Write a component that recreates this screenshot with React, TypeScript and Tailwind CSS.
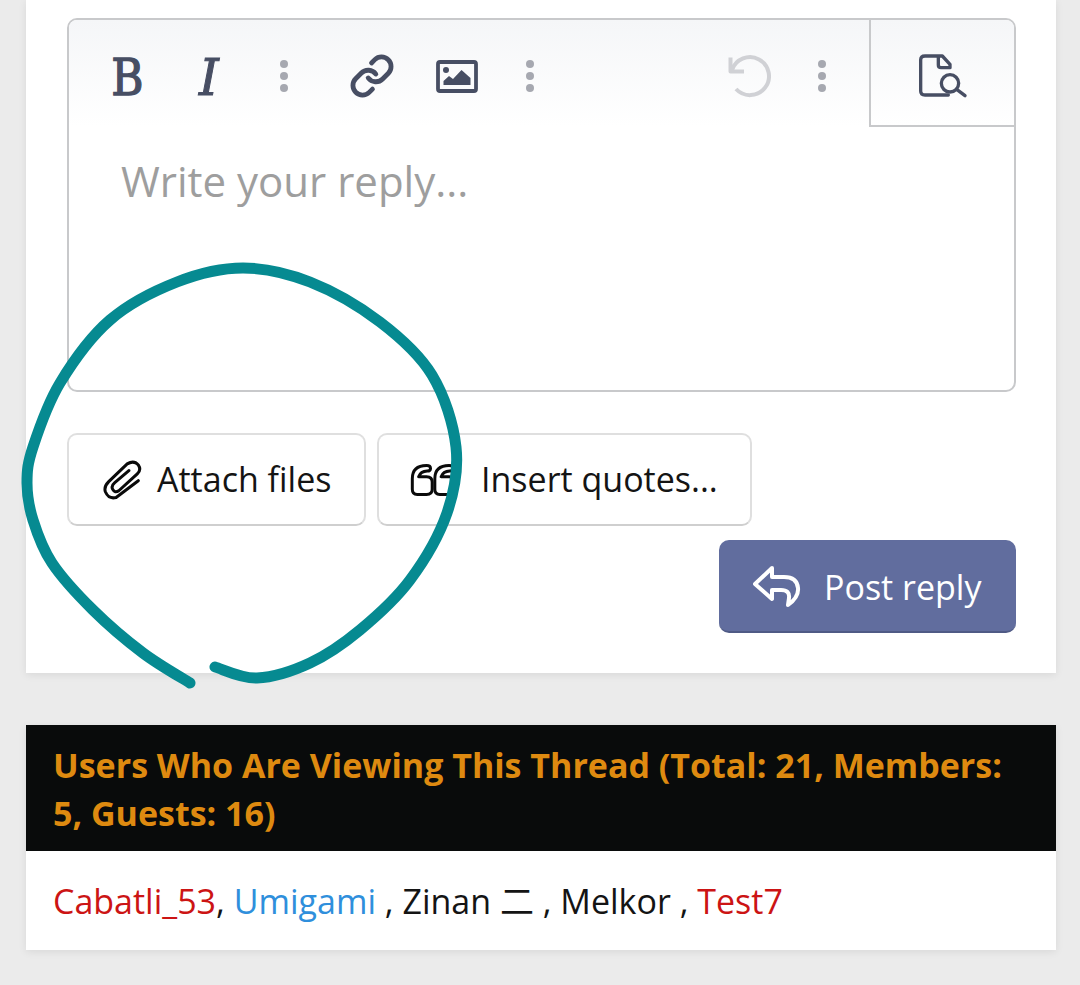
import { Link } from 'lucide-react';

const font = { fontFamily: '"Open Sans", "Noto Sans CJK SC", sans-serif' };

// --- Editor toolbar icons ---
const Dots = () => (
  <svg width="12" height="36" viewBox="0 0 12 36" className="fill-[#a6a8b0]">
    <circle cx="6" cy="6" r="4" />
    <circle cx="6" cy="18" r="4" />
    <circle cx="6" cy="30" r="4" />
  </svg>
);

const ImageIcon = () => (
  <svg width="42" height="33" viewBox="0 0 42 33">
    <rect x="2" y="2" width="38" height="29" rx="2" fill="none" stroke="#474e63" strokeWidth="3.8" />
    <circle cx="10" cy="10" r="3" fill="#474e63" />
    <path d="M7.500 25 V21 L13 16 L17 19 L25.500 10 L34.500 18 V25 Z" fill="#474e63" />
  </svg>
);

const UndoIcon = () => (
  <svg width="44" height="44" viewBox="0 0 44 44" fill="none" stroke="#d0d1d5" strokeWidth="4">
    <path d="M5 16 A19 19 0 1 1 9 35" />
    <path d="M3.500 3.500 V17.500 H17" strokeLinejoin="round" />
  </svg>
);

const PreviewIcon = () => (
  <svg width="75" height="60" viewBox="0 0 225 180" fill="none" stroke="#474e63" strokeWidth="10" strokeLinecap="round" strokeLinejoin="round">
    <path d="M130 150 H60 Q47 150 47 138 V45 Q47 33 60 33 H112 L135 58 V68 H108 Q100 68 100 60 V35" />
    <circle cx="135" cy="115" r="26" />
    <path d="M155 133 L180 152" />
  </svg>
);

const ClipIcon = () => (
  <svg width="42" height="44" viewBox="20 5 125 130" fill="none" stroke="#0a0a0a" strokeWidth="9" strokeLinecap="round" strokeLinejoin="round">
    <path d="M128 72 L62 122 Q40 128 30 105 Q25 90 40 75 L95 22 Q115 10 128 25 Q138 40 125 52 L70 102 Q58 110 52 98 Q46 88 58 78 L100 42" />
  </svg>
);

const QuoteIcon = () => (
  <svg width="48" height="34" viewBox="30 25 145 102" fill="none" stroke="#0a0a0a" strokeWidth="9" strokeLinejoin="round">
    <path d="M37 72 Q37 32 80 32 Q92 32 92 41 Q92 49 82 49 Q62 50 56 66 H80 Q97 66 97 82 V104 Q97 120 80 120 H52 Q37 120 37 104 Z" />
    <path d="M105 72 Q105 32 148 32 Q160 32 160 41 Q160 49 150 49 Q130 50 124 66 H148 Q165 66 165 82 V104 Q165 120 148 120 H120 Q105 120 105 104 Z" />
  </svg>
);

const ReplyIcon = () => (
  <svg width="48" height="42" viewBox="0 0 48 42" fill="none" stroke="white" strokeWidth="4" strokeLinejoin="round" strokeLinecap="round">
    <path d="M19 2 L2 18 L19 33 V24 H28 Q37 24 36 32 L35 39 Q46 31 45 22 Q44 11 31 11 H19 Z" />
  </svg>
);

// --- Hand-drawn marker loop, smoothed through points read off the picture ---
const markerPoints = [
  [190, 683], [143, 653], [93, 610], [52, 563], [33, 520], [27, 483], [33, 447], [60, 383], [110, 320],
  [177, 282], [243, 268], [310, 282], [380, 322], [432, 375], [456, 447], [447, 513], [410, 580],
  [360, 630], [310, 663], [257, 678], [215, 667],
];

function smoothPath(pts: number[][]) {
  let d = `M${pts[0][0]} ${pts[0][1]}`;
  for (let i = 0; i < pts.length - 1; i++) {
    const p0 = pts[Math.max(i - 1, 0)];
    const p1 = pts[i];
    const p2 = pts[i + 1];
    const p3 = pts[Math.min(i + 2, pts.length - 1)];
    const c1 = [p1[0] + (p2[0] - p0[0]) / 6, p1[1] + (p2[1] - p0[1]) / 6];
    const c2 = [p2[0] - (p3[0] - p1[0]) / 6, p2[1] - (p3[1] - p1[1]) / 6];
    d += ` C${c1[0]} ${c1[1]} ${c2[0]} ${c2[1]} ${p2[0]} ${p2[1]}`;
  }
  return d;
}

export default function App() {
  return (
    <div style={font} className="relative h-[985px] w-[1080px] overflow-hidden bg-[#ebebeb] pl-[26px] pr-[24px]">
      {/* Reply card */}
      <section className="h-[673px] bg-white pl-[41px] pr-[40px] pt-[18px] shadow-[0_2px_8px_rgba(0,0,0,0.08)]">
        <div className="h-[374px] w-[949px] overflow-hidden rounded-[10px] border-2 border-[#c8c9cb]">
          <div className="flex h-[107px]">
            <div className="flex flex-1 items-start bg-gradient-to-b from-[#f5f6f8] to-white pl-[17px] pt-[26px]">
              <button className="flex h-[60px] w-[82px] items-center justify-center pt-[3px] text-[50px] leading-none text-[#474e63] [-webkit-text-stroke:1.4px_#474e63]" style={{ fontFamily: '"DejaVu Serif", serif' }}>
                <span className="inline-block scale-x-[0.88]">B</span>
              </button>
              <button className="flex h-[60px] w-[82px] items-center justify-center pt-[3px] text-[50px] italic leading-none text-[#474e63] [-webkit-text-stroke:1px_#474e63]" style={{ fontFamily: '"DejaVu Serif", serif' }}>I</button>
              <div className="flex h-[60px] w-[68px] items-center justify-center"><Dots /></div>
              <div className="flex h-[60px] w-[108px] items-center justify-center">
                <Link size={46} strokeWidth={2.5} color="#474e63" />
              </div>
              <div className="flex h-[60px] w-[62px] items-center justify-center"><ImageIcon /></div>
              <div className="flex h-[60px] w-[84px] items-center justify-center"><Dots /></div>
              <div className="ml-auto flex h-[60px] w-[50px] items-center justify-center pr-[3px]"><UndoIcon /></div>
              <div className="flex h-[60px] w-[94px] items-center justify-center"><Dots /></div>
            </div>
            <div className="flex w-[145px] items-start justify-center border-b-2 border-l-2 border-[#c8c9cb] bg-gradient-to-b from-[#f5f6f8] to-white pt-[25px]">
              <PreviewIcon />
            </div>
          </div>
          <p className="pl-[52px] pt-[25px] text-[42px] leading-[58px] text-[#9e9e9e]">Write your reply...</p>
        </div>

        {/* Attachment buttons */}
        <div className="mt-[41px] flex gap-[11px]">
          <button className="flex h-[93px] w-[299px] items-center gap-[13px] rounded-[10px] border-2 border-[#dfdfdf] border-b-[#cfcfcf] pl-[33px] text-[34px] text-[#141414]">
            <ClipIcon /> Attach files
          </button>
          <button className="flex h-[93px] w-[375px] items-center gap-[23px] rounded-[10px] border-2 border-[#dfdfdf] border-b-[#cfcfcf] pl-[31px] text-[34px] text-[#141414]">
            <QuoteIcon /> Insert quotes...
          </button>
        </div>

        <div className="mt-[14px] flex justify-end">
          <button className="flex h-[93px] w-[297px] items-center gap-[23px] rounded-[10px] border-b-2 border-[#4f5a85] bg-[#616d9e] pl-[34px] pt-[3px] text-[34px] text-white">
            <ReplyIcon /> Post reply
          </button>
        </div>
      </section>

      {/* Users viewing */}
      <section className="mt-[52px] shadow-[0_2px_8px_rgba(0,0,0,0.08)]">
        <h3 className="bg-[#090b0b] px-[27px] pb-[14px] pt-[16px] text-[34px] font-bold leading-[48px] text-[#de8a10]">
          Users Who Are Viewing This Thread (Total: 21, Members: 5, Guests: 16)
        </h3>
        <p className="h-[99px] bg-white px-[27px] pt-[27px] text-[34px] leading-[46px] text-[#141414]">
          <span className="text-[#cc1414]">Cabatli_53</span>, <span className="text-[#2f8fdc]">Umigami</span> , Zinan 二 , Melkor , <span className="text-[#cc1414]">Test7</span>
        </p>
      </section>

      <svg width="1080" height="985" viewBox="0 0 1080 985" fill="none" className="pointer-events-none absolute left-0 top-0">
        <path d={smoothPath(markerPoints)} stroke="#068a91" strokeWidth="11" strokeLinecap="round" strokeLinejoin="round" />
      </svg>
    </div>
  );
}
